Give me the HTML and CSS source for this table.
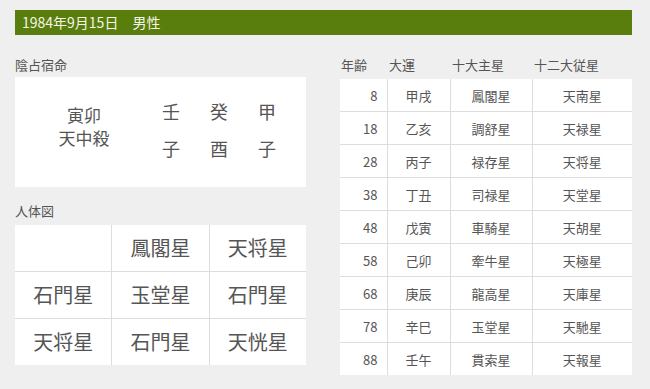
FILE: index.html
```html
<!DOCTYPE html>
<html lang="ja">
<head>
<meta charset="utf-8">
<link rel="stylesheet" href="styles.css">
</head>
<body>
<div class="page">
  <div class="title">1984年9月15日　男性</div>
  <div class="main">
    <div class="left">
      <div class="label">陰占宿命</div>
      <div class="inbox">
        <div class="tenchu">寅卯<br>天中殺</div>
        <div class="stems">
          <span>壬</span><span>癸</span><span>甲</span>
          <span>子</span><span>酉</span><span>子</span>
        </div>
      </div>
      <div class="label label2">人体図</div>
      <div class="body-grid">
        <div class="cell"></div><div class="cell">鳳閣星</div><div class="cell">天将星</div>
        <div class="cell">石門星</div><div class="cell">玉堂星</div><div class="cell">石門星</div>
        <div class="cell">天将星</div><div class="cell">石門星</div><div class="cell">天恍星</div>
      </div>
    </div>
    <div class="right">
      <div class="thead">
        <span class="h-age">年齢</span><span class="h-un">大運</span><span class="h-main">十大主星</span><span class="h-sub">十二大従星</span>
      </div>
      <table class="fortune">
        <tr><td class="age">8</td><td>甲戌</td><td>鳳閣星</td><td>天南星</td></tr>
        <tr><td class="age">18</td><td>乙亥</td><td>調舒星</td><td>天禄星</td></tr>
        <tr><td class="age">28</td><td>丙子</td><td>禄存星</td><td>天将星</td></tr>
        <tr><td class="age">38</td><td>丁丑</td><td>司禄星</td><td>天堂星</td></tr>
        <tr><td class="age">48</td><td>戊寅</td><td>車騎星</td><td>天胡星</td></tr>
        <tr><td class="age">58</td><td>己卯</td><td>牽牛星</td><td>天極星</td></tr>
        <tr><td class="age">68</td><td>庚辰</td><td>龍高星</td><td>天庫星</td></tr>
        <tr><td class="age">78</td><td>辛巳</td><td>玉堂星</td><td>天馳星</td></tr>
        <tr><td class="age">88</td><td>壬午</td><td>貫索星</td><td>天報星</td></tr>
      </table>
    </div>
  </div>
</div>
</body>
</html>
```
FILE: styles.css
```css
html, body {
  margin: 0;
  padding: 0;
  background: #efefef;
}
body {
  font-family: "Noto Sans CJK JP", "Noto Sans", sans-serif;
  color: #555;
}
.page {
  padding: 10px 0 0 15px;
  width: 617px;
}
.title {
  height: 25px;
  line-height: 25px;
  background: #5a7e0e;
  color: #f5f5e6;
  font-size: 14px;
  padding-left: 7px;
}
.main {
  display: flex;
  gap: 34px;
  margin-top: 20px;
}
.left {
  width: 291px;
}
.label {
  font-size: 13px;
  line-height: 20px;
  height: 20px;
  margin-bottom: 2px;
}
.label2 {
  margin-top: 14px;
  margin-bottom: 4px;
}
.inbox {
  background: #fff;
  height: 110px;
  display: flex;
  align-items: flex-start;
}
.tenchu {
  width: 132px;
  box-sizing: border-box;
  padding-left: 6px;
  padding-top: 26px;
  text-align: center;
  font-size: 17px;
  line-height: 23px;
}
.stems {
  display: grid;
  grid-template-columns: repeat(3, 48px);
  grid-auto-rows: 37px;
  align-content: start;
  padding-top: 16px;
  font-size: 18px;
  line-height: 37px;
  text-align: center;
}
.body-grid {
  display: grid;
  grid-template-columns: repeat(3, 1fr);
  grid-auto-rows: 46px;
  gap: 1px;
  background: #dddddd;
}
.cell {
  background: #fff;
  font-size: 20px;
  line-height: 46px;
  text-align: center;
}
.right {
  width: 292px;
}
.thead {
  display: flex;
  font-size: 13px;
  line-height: 20px;
  height: 24px;
}
.h-age { width: 49px; padding-left: 1px; box-sizing: border-box; }
.h-un { width: 63px; }
.h-main { width: 82px; }
.h-sub { flex: 1; }
.fortune {
  width: 292px;
  border-collapse: collapse;
  border-style: hidden;
  background: #fff;
  font-size: 13px;
}
.fortune td {
  border: 1px solid #dddddd;
  height: 32px;
  padding: 0;
  text-align: center;
}
.fortune td:nth-child(1) { width: 47px; }
.fortune td:nth-child(2) { width: 62px; }
.fortune td:nth-child(3) { width: 81px; }
.fortune td.age {
  text-align: right;
  padding-right: 9px;
  box-sizing: border-box;
}
```
